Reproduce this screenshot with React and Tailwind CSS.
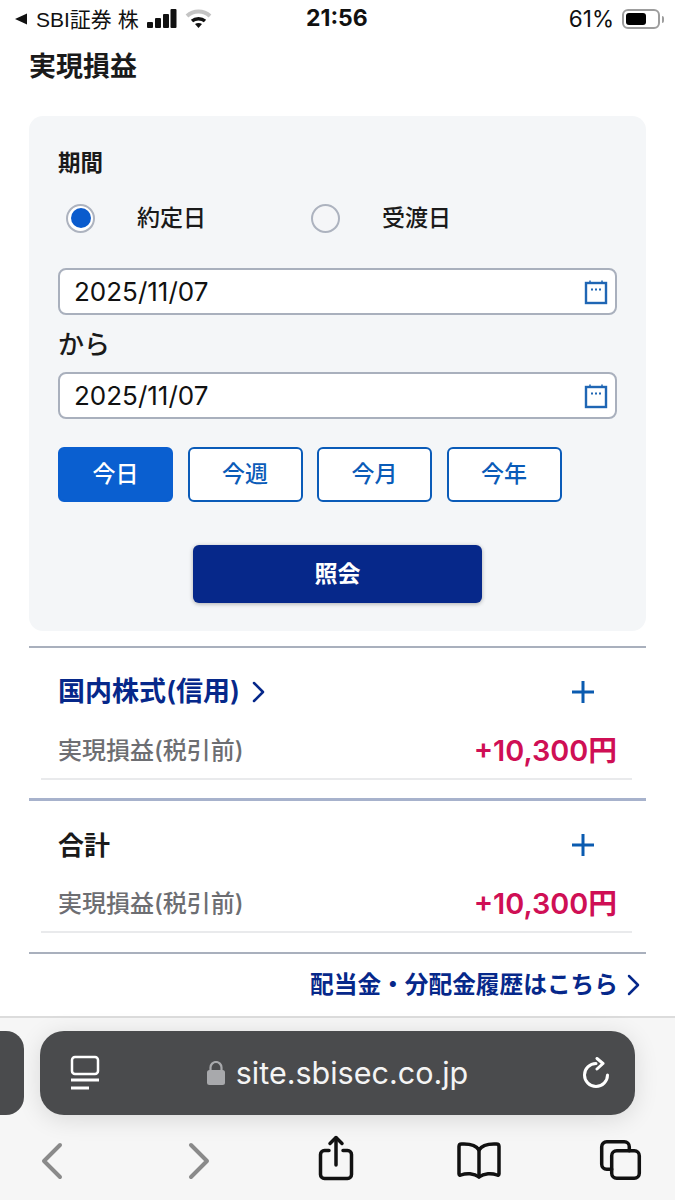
const JP = { fontFamily: 'Inter, "Liberation Sans", "Noto Sans CJK JP", sans-serif' };

function Calendar() {
  return (
    <svg width="24" height="26" viewBox="0 0 24 26" fill="none" stroke="#1f66b4" strokeWidth="2.400" className="shrink-0">
      <rect x="2" y="4" width="20" height="20" />
      <path d="M6 1.500v3M18 1.500v3" strokeWidth="1.500" />
      <path d="M7 10.500h2M11 10.500h2M15 10.500h2" strokeWidth="1.800" />
    </svg>
  );
}

function DateInput({ value }) {
  return (
    <div className="h-[47px] rounded-[8px] border-2 border-[#a9b0bd] bg-white flex items-center justify-between pl-[14px] pr-[7px]">
      <span className="text-[26px] text-[#111] leading-none">{value}</span>
      <Calendar />
    </div>
  );
}

function Radio({ checked, label, width }) {
  return (
    <div className="flex items-center" style={{ width }}>
      <div className={`w-[29px] h-[29px] rounded-full border-2 border-[#adb3bf] flex items-center justify-center ${checked ? 'bg-white' : 'bg-[#f5f6f8]'} ml-[8px]`}>
        {checked && <div className="w-[20px] h-[20px] rounded-full bg-[#0a5bcd]" />}
      </div>
      <span className="ml-[42px] text-[23px] font-medium text-[#1a1a1a] leading-none">{label}</span>
    </div>
  );
}

function PeriodButton({ label, active }) {
  return (
    <div className={`w-[115px] h-[55px] rounded-[6px] border-2 flex items-center justify-center text-[23px] font-medium ${active ? 'bg-[#0a5fd0] border-[#0a5fd0] text-white' : 'bg-white border-[#0a5bb8] text-[#0a5bb8]'}`}>
      {label}
    </div>
  );
}

function Plus() {
  return (
    <svg width="24" height="24" viewBox="0 0 24 24" stroke="#0a5bb0" strokeWidth="3" className="shrink-0">
      <path d="M12 1v22M1 12h22" />
    </svg>
  );
}

function Chevron({ color }) {
  return (
    <svg width="24" height="24" viewBox="0 0 24 24" fill="none" stroke={color} strokeWidth="2.500" strokeLinecap="round" strokeLinejoin="round" className="shrink-0">
      <path d="M8 3l9 9-9 9" />
    </svg>
  );
}

function ResultRow() {
  return (
    <div className="ml-[12px] mr-[14px] h-[44px] border-b-2 border-[#e9eaec] flex items-start justify-between pl-[17px] pr-[15px]">
      <span className="text-[24px] leading-[30px] font-medium text-[#6d6e72]">実現損益(税引前)</span>
      <span className="text-[28.800px] leading-[30px] font-semibold text-[#cf0f55]">+10,300円</span>
    </div>
  );
}

export default function App() {
  return (
    <div className="w-[675px] h-[1200px] bg-white overflow-hidden flex flex-col" style={JP}>
      <div className="h-[38px] pl-[14px] pr-[11px] flex items-center justify-between relative text-[#111]">
        <div className="flex items-center">
          <svg width="14" height="14" viewBox="0 0 14 14" fill="#111"><path d="M13 1.500v11L1 7z" /></svg>
          <span className="ml-[8px] text-[21px] leading-none" style={{ fontFamily: '"Liberation Sans", "Noto Sans CJK JP", sans-serif' }}>SBI証券 株</span>
          <svg className="ml-[8px]" width="30" height="20" viewBox="0 0 30 20" fill="#111">
            <rect x="0" y="13" width="6" height="6" rx="1" />
            <rect x="8" y="9" width="6" height="10" rx="1" />
            <rect x="16" y="5" width="6" height="14" rx="1" />
            <rect x="23.500" y="0" width="6" height="19" rx="1" />
          </svg>
          <svg width="27" height="20" viewBox="0 0 27 20" fill="none" className="ml-[8px]">
            <path d="M2 7c6.500-6 16.500-6 23 0" stroke="#c4c4c4" strokeWidth="4" />
            <path d="M7 12c3.500-3 9.500-3 13 0" stroke="#111" strokeWidth="3.500" />
            <path d="M13.500 19l-3.500-4c2-1.500 5-1.500 7 0z" fill="#111" />
          </svg>
        </div>
        <span className="absolute left-[306px] top-[5px] text-[23px] font-bold leading-[26px]">21:56</span>
        <div className="flex items-center gap-[8px]">
          <span className="text-[22.500px] leading-none">61%</span>
          <div className="flex items-center">
            <div className="w-[38px] h-[20px] rounded-[6px] border-2 border-[#9d9d9d] p-[2px]">
              <div className="w-[20px] h-full rounded-[3px] bg-black" />
            </div>
            <div className="w-[2px] h-[7px] bg-[#9d9d9d] ml-[2px] rounded-r" />
          </div>
        </div>
      </div>

      <div className="h-[78px] pl-[29px] flex items-start">
        <h1 className="text-[27px] font-bold leading-[58px] text-[#1a1a1a]">実現損益</h1>
      </div>

      <div className="mx-[29px] h-[515px] rounded-[14px] bg-[#f4f6f8] px-[29px] pt-[34px]">
        <div className="text-[22.500px] font-bold leading-[26px] text-[#1a1a1a]">期間</div>
        <div className="flex items-center mt-[27px] h-[30px]">
          <Radio checked label="約定日" width="245px" />
          <Radio label="受渡日" />
        </div>
        <div className="mt-[35px]"><DateInput value="2025/11/07" /></div>
        <div className="h-[57px] text-[26px] leading-[60px] font-medium text-[#1a1a1a]">から</div>
        <DateInput value="2025/11/07" />
        <div className="flex gap-[14.500px] mt-[28px]">
          <PeriodButton label="今日" active />
          <PeriodButton label="今週" />
          <PeriodButton label="今月" />
          <PeriodButton label="今年" />
        </div>
        <div className="flex justify-center mt-[43px]">
          <div className="w-[289px] h-[58px] rounded-[6px] bg-[#06288a] text-white font-bold text-[23px] flex items-center justify-center shadow-[0_1px_4px_rgba(0,0,0,0.3)]">照会</div>
        </div>
      </div>

      <div className="mx-[29px] mt-[15px] h-[2px] bg-[#a9b0bd]" />
      <div className="h-[150px] flex flex-col">
        <div className="mx-[29px] h-[88px] flex items-center justify-between pl-[29px] pr-[51px]">
          <div className="flex items-center gap-[6px]">
            <span className="text-[27px] font-semibold text-[#06288a]">国内株式(信用)</span>
            <Chevron color="#06288a" />
          </div>
          <Plus />
        </div>
        <div className="mx-[29px]"><ResultRow /></div>
      </div>
      <div className="mx-[29px] h-[3px] bg-[#a7b2cc]" />
      <div className="h-[151px] flex flex-col">
        <div className="mx-[29px] h-[88px] flex items-center justify-between pl-[29px] pr-[51px]">
          <span className="text-[26px] font-bold text-[#1a1a1a]">合計</span>
          <Plus />
        </div>
        <div className="mx-[29px]"><ResultRow /></div>
      </div>
      <div className="mx-[29px] h-[2px] bg-[#a9b0bd]" />
      <div className="h-[62px] flex items-center justify-end pr-[30px] gap-[3px]">
        <span className="text-[23.700px] font-semibold text-[#06288a]">配当金・分配金履歴はこちら</span>
        <Chevron color="#06288a" />
      </div>

      <div className="flex-1 bg-[#f6f6f6] border-t-2 border-[#dcdcdc] flex flex-col">
        <div className="relative mt-[13px] h-[84px] ml-[40px] mr-[40px] rounded-[24px] bg-[#4a4b4d] flex items-center justify-center shadow-[0_4px_24px_rgba(0,0,0,0.12)]">
          <div className="absolute left-[-60px] top-0 w-[44px] h-[84px] rounded-[18px] bg-[#4a4b4d]" />
          <svg className="absolute left-[30px] top-[24px]" width="30" height="36" viewBox="0 0 30 36" fill="none" stroke="#fff" strokeWidth="2.500">
            <rect x="2" y="2" width="26" height="17" rx="3" />
            <path d="M1 25h28" strokeWidth="3" />
            <path d="M1 33h18" strokeWidth="3" />
          </svg>
          <div className="flex items-center gap-[11px]">
            <svg width="18" height="24" viewBox="0 0 18 24" fill="#a8a9ac">
              <rect x="0" y="9" width="18" height="15" rx="2.500" />
              <path d="M3.500 10V6.500a5.500 5.500 0 0 1 11 0V10" fill="none" stroke="#a8a9ac" strokeWidth="2.200" />
            </svg>
            <span className="text-[30.500px] leading-none text-[#f4f4f4]">site.sbisec.co.jp</span>
          </div>
          <svg className="absolute left-[543px] top-[26px]" width="26" height="31" viewBox="0 0 26 31" fill="none" stroke="#fff" strokeWidth="3" strokeLinecap="round" strokeLinejoin="round">
            <path d="M13 6.500A11.500 11.500 0 1 0 24.500 18" />
            <path d="M14 1.500l6 5-6 5.500" />
          </svg>
        </div>
        <div className="flex-1 relative">
          <svg className="absolute left-[40px] top-[26px]" width="26" height="40" viewBox="0 0 26 40" fill="none" stroke="#8a8a8a" strokeWidth="4" strokeLinecap="round" strokeLinejoin="round">
            <path d="M20 4L4 20l16 16" />
          </svg>
          <svg className="absolute left-[185px] top-[26px]" width="26" height="40" viewBox="0 0 26 40" fill="none" stroke="#8a8a8a" strokeWidth="4" strokeLinecap="round" strokeLinejoin="round">
            <path d="M6 4l16 16L6 36" />
          </svg>
          <svg className="absolute left-[317px] top-[20px]" width="38" height="48" viewBox="0 0 38 48" fill="none" stroke="#111" strokeWidth="3.500" strokeLinecap="round" strokeLinejoin="round">
            <path d="M12 15.500H7.500a4 4 0 0 0-4 4v20a4 4 0 0 0 4 4h23a4 4 0 0 0 4-4v-20a4 4 0 0 0-4-4H26" />
            <path d="M19 30V3" />
            <path d="M13 8.500l6-6 6 6" />
          </svg>
          <svg className="absolute left-[456px] top-[26px]" width="46" height="38" viewBox="0 0 46 38" fill="none" stroke="#111" strokeWidth="3.500" strokeLinejoin="round" strokeLinecap="round">
            <path d="M23 9C20 4 14 3 8 3H5.500C4 3 3 4 3 5.500V33c0 1 1 1.500 2 1C10 32 18 32 23 36c5-4 13-4 18-2 1 .5 2 0 2-1V5.500C43 4 42 3 40.500 3H38C32 3 26 4 23 9z" />
            <path d="M23 9v27" />
          </svg>
          <svg className="absolute left-[599px] top-[24px]" width="44" height="42" viewBox="0 0 44 42" fill="none" stroke="#111" strokeWidth="3.500" strokeLinecap="round">
            <rect x="12.700" y="11.700" width="27.600" height="27.600" rx="5" />
            <path d="M12.700 30.300h-5a5 5 0 0 1-5-5V7.700a5 5 0 0 1 5-5h17.600a5 5 0 0 1 5 5v4" />
          </svg>
        </div>
      </div>
    </div>
  );
}
